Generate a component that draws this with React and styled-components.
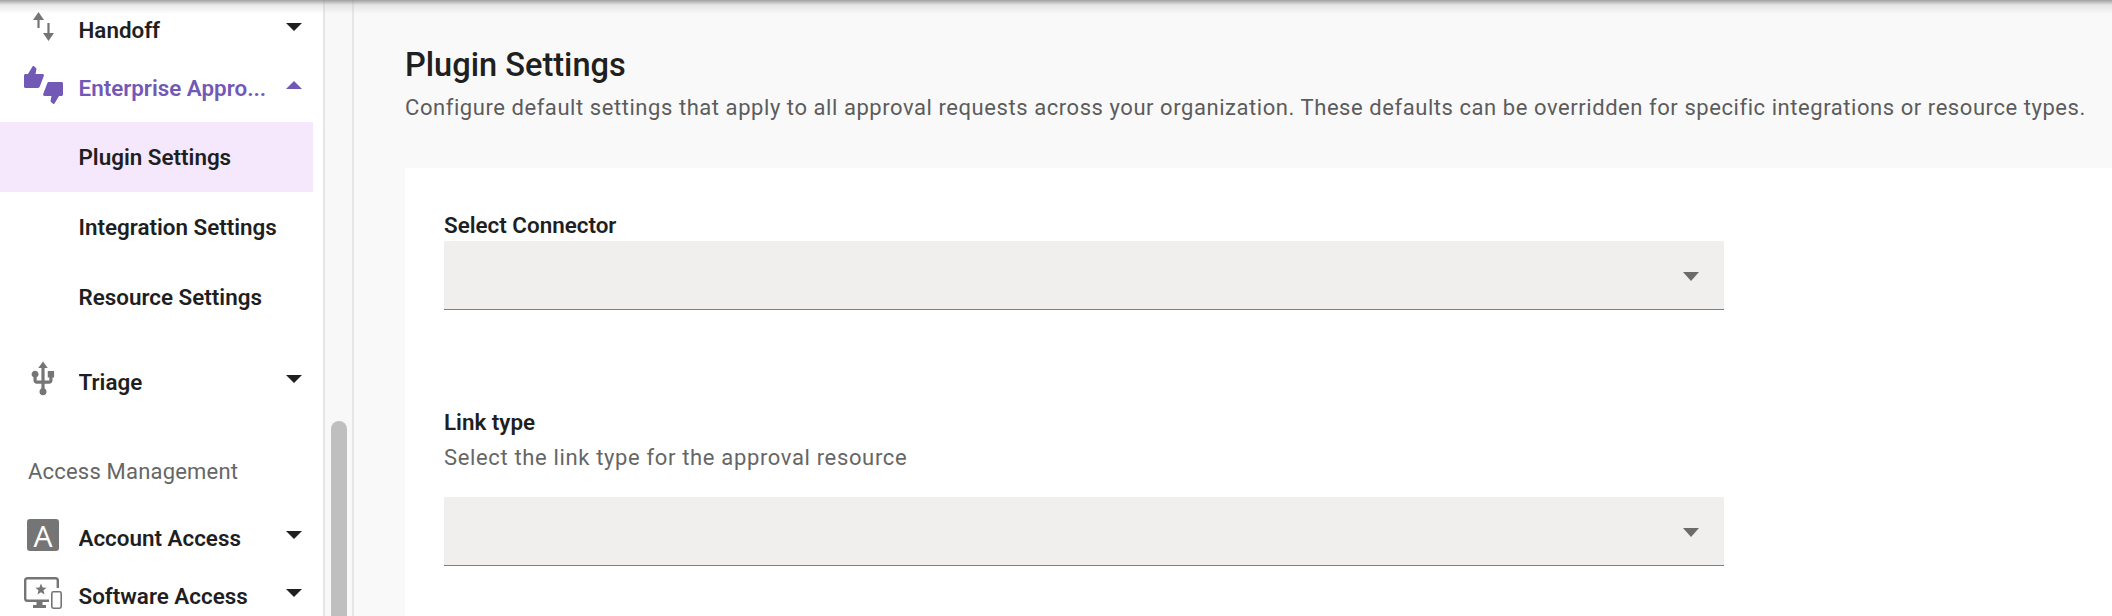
import React from "react";
import styled, { createGlobalStyle } from "styled-components";
import { MdUsb } from "react-icons/md";

const GlobalStyle = createGlobalStyle`
  html, body {
    margin: 0;
    padding: 0;
    height: 616px;
    overflow: hidden;
    background: #f9f9f9;
    font-family: Roboto, "Noto Sans", sans-serif;
  }
`;

const Page = styled.div`
  position: relative;
  display: flex;
  width: 2112px;
  height: 616px;
  overflow: hidden;
`;

const TopShadow = styled.div`
  position: absolute;
  top: 0;
  left: 0;
  right: 0;
  height: 14px;
  background: linear-gradient(to bottom, rgba(130, 130, 130, 0.75), rgba(190, 190, 190, 0.35) 35%, rgba(255, 255, 255, 0));
`;

const Sidebar = styled.nav`
  flex: 0 0 323px;
  display: flex;
  flex-direction: column;
  padding-top: 1px;
  padding-right: 10px;
  box-sizing: border-box;
  background: #fff;
`;

const Track = styled.div`
  flex: 0 0 31px;
  padding-top: 421px;
  padding-left: 6px;
  box-sizing: border-box;
  background: #f8f8f8;
  border-left: 2px solid #e6e6e6;
  border-right: 2px solid #e6e6e6;
`;

const Thumb = styled.div`
  width: 16px;
  height: 300px;
  border-radius: 8px;
  background: #bfbfbf;
`;

const Row = styled.div`
  flex-shrink: 0;
  display: flex;
  align-items: center;
  height: 58px;
  margin-top: ${props => props.$top || 0}px;
  padding: 0 11px 0 23px;
  color: ${props => (props.$active ? "#7159b5" : "#1f1f1f")};
`;

const IconSlot = styled.div`
  flex: 0 0 40px;
  display: flex;
  justify-content: center;
  margin-right: 15.5px;
  margin-top: ${props => props.$shift || 0}px;
  color: #757575;
`;

const RowLabel = styled.span`
  flex: 1;
  font-size: 22.4px;
  font-weight: 600;
  white-space: nowrap;
  overflow: hidden;
  text-overflow: ellipsis;
`;

const Caret = styled.span`
  width: 0;
  height: 0;
  margin-top: -6px;
  border-left: 8px solid transparent;
  border-right: 8px solid transparent;
  border-top: ${props => (props.$up ? "0" : "8px solid currentColor")};
  border-bottom: ${props => (props.$up ? "8px solid currentColor" : "0")};
`;

const SubItem = styled.div`
  flex-shrink: 0;
  display: flex;
  align-items: center;
  height: 70px;
  margin-top: ${props => props.$top || 0}px;
  padding-left: 78.5px;
  box-sizing: border-box;
  font-size: 22.4px;
  font-weight: 600;
  color: #1f1f1f;
  background: ${props => (props.$selected ? "#f5e8fd" : "transparent")};
`;

const SectionTitle = styled.div`
  flex-shrink: 0;
  margin: 46px 0 0 28px;
  height: 30px;
  line-height: 30px;
  font-size: 22px;
  letter-spacing: 0.2px;
  color: #666;
`;

const LetterBadge = styled.div`
  display: flex;
  align-items: center;
  justify-content: center;
  width: 32px;
  height: 32px;
  border-radius: 3px;
  background: #757575;
  color: #fff;
  font-family: "Open Sans", sans-serif;
  font-size: 30px;
  font-weight: 500;
`;

const Main = styled.main`
  flex: 1;
  min-width: 0;
  padding: 43px 0 0 51px;
`;

const Title = styled.h1`
  margin: 0;
  font-size: 32.6px;
  line-height: 44px;
  font-weight: 500;
  color: #202020;
`;

const Description = styled.p`
  margin: 6px 0 0;
  font-size: 22px;
  line-height: 30px;
  letter-spacing: 0.56px;
  color: #5c5c5c;
  white-space: nowrap;
`;

const Card = styled.section`
  margin-top: 45px;
  height: 500px;
  padding: 42px 0 0 39px;
  background: #fff;
`;

const FieldLabel = styled.div`
  font-size: 22.4px;
  line-height: 30px;
  font-weight: 600;
  color: #1f1f1f;
`;

const HelpText = styled.div`
  margin-top: 6px;
  font-size: 22px;
  line-height: 30px;
  letter-spacing: 0.65px;
  color: #666;
`;

const Field = styled.div`
  margin-bottom: ${props => props.$gap || 0}px;
`;

const Select = styled.div`
  display: flex;
  align-items: center;
  justify-content: flex-end;
  width: 1280px;
  height: 69px;
  margin-top: ${props => props.$top || 0}px;
  padding: 2px 25px 0 0;
  box-sizing: border-box;
  background: #f0efed;
  border-bottom: 1px solid #7f7f7f;
`;

const SelectArrow = styled.span`
  width: 0;
  height: 0;
  border-left: 8px solid transparent;
  border-right: 8px solid transparent;
  border-top: 9px solid #6b6b6b;
`;

const ArrowsIcon = () => (
  <svg width="21" height="29" viewBox="0 0 21 29" fill="currentColor">
    <path d="M0 8 5.5 0 11 8H6.6v8H4.4V8z" />
    <path d="M10 21h4.4v-10h2.2v10H21l-5.5 8z" />
  </svg>
);

const thumb =
  "M1.5 8H4L8.5 .4C8.8 0 9.5 -.1 10 .3L12 2C12.4 2.4 12.5 2.8 12.4 3.3L11.5 8H18.5C19.6 8 20.2 9 19.8 10L15.8 20.6C15.4 21.5 14.8 22 14 22H1.5C.7 22 0 21.3 0 20.5V9.5C0 8.7 .7 8 1.5 8Z";

const ThumbsIcon = () => (
  <svg width="39" height="38" viewBox="0 0 39 38" fill="#7159b5">
    <path d={thumb} />
    <path d={thumb} transform="translate(39 38) rotate(180)" />
  </svg>
);

const SoftwareIcon = () => (
  <svg width="38" height="32" viewBox="0 0 38 32" fill="none">
    <path
      d="M25 23.8H3.5A2.3 2.3 0 0 1 1.2 21.5V3.5A2.3 2.3 0 0 1 3.5 1.2H31.5A2.3 2.3 0 0 1 33.8 3.5V11"
      stroke="currentColor"
      strokeWidth="2.4"
    />
    <path d="M12.5 24h6v4h3.5v3H9v-3h3.5z" fill="currentColor" />
    <path
      d="M17 6.5 18.6 10.4 22.6 10.7 19.5 13.3 20.5 17.4 17 15.2 13.5 17.4 14.5 13.3 11.4 10.7 15.4 10.4z"
      fill="currentColor"
    />
    <rect x="27.8" y="14.8" width="9.4" height="16.4" rx="1.6" stroke="currentColor" strokeWidth="1.6" />
  </svg>
);

const App = () => (
  <Page>
    <GlobalStyle />
    <Sidebar>
      <Row>
        <IconSlot $shift={-7}>
          <ArrowsIcon />
        </IconSlot>
        <RowLabel>Handoff</RowLabel>
        <Caret />
      </Row>
      <Row $active>
        <IconSlot $shift={-6}>
          <ThumbsIcon />
        </IconSlot>
        <RowLabel>Enterprise Appro...</RowLabel>
        <Caret $up />
      </Row>
      <SubItem $selected $top={5}>Plugin Settings</SubItem>
      <SubItem>Integration Settings</SubItem>
      <SubItem>Resource Settings</SubItem>
      <Row $top={21}>
        <IconSlot $shift={-7}>
          <MdUsb size={38} />
        </IconSlot>
        <RowLabel>Triage</RowLabel>
        <Caret />
      </Row>
      <SectionTitle>Access Management</SectionTitle>
      <Row $top={22}>
        <IconSlot $shift={-6}>
          <LetterBadge>A</LetterBadge>
        </IconSlot>
        <RowLabel>Account Access</RowLabel>
        <Caret />
      </Row>
      <Row>
        <IconSlot $shift={-6}>
          <SoftwareIcon />
        </IconSlot>
        <RowLabel>Software Access</RowLabel>
        <Caret />
      </Row>
    </Sidebar>
    <Track>
      <Thumb />
    </Track>
    <Main>
      <Title>Plugin Settings</Title>
      <Description>
        Configure default settings that apply to all approval requests across your organization. These defaults can be overridden for specific integrations or resource types.
      </Description>
      <Card>
        <Field $gap={97}>
          <FieldLabel>Select Connector</FieldLabel>
          <Select $top={1}>
            <SelectArrow />
          </Select>
        </Field>
        <Field>
          <FieldLabel>Link type</FieldLabel>
          <HelpText>Select the link type for the approval resource</HelpText>
          <Select $top={24}>
            <SelectArrow />
          </Select>
        </Field>
      </Card>
    </Main>
    <TopShadow />
  </Page>
);

export default App;
